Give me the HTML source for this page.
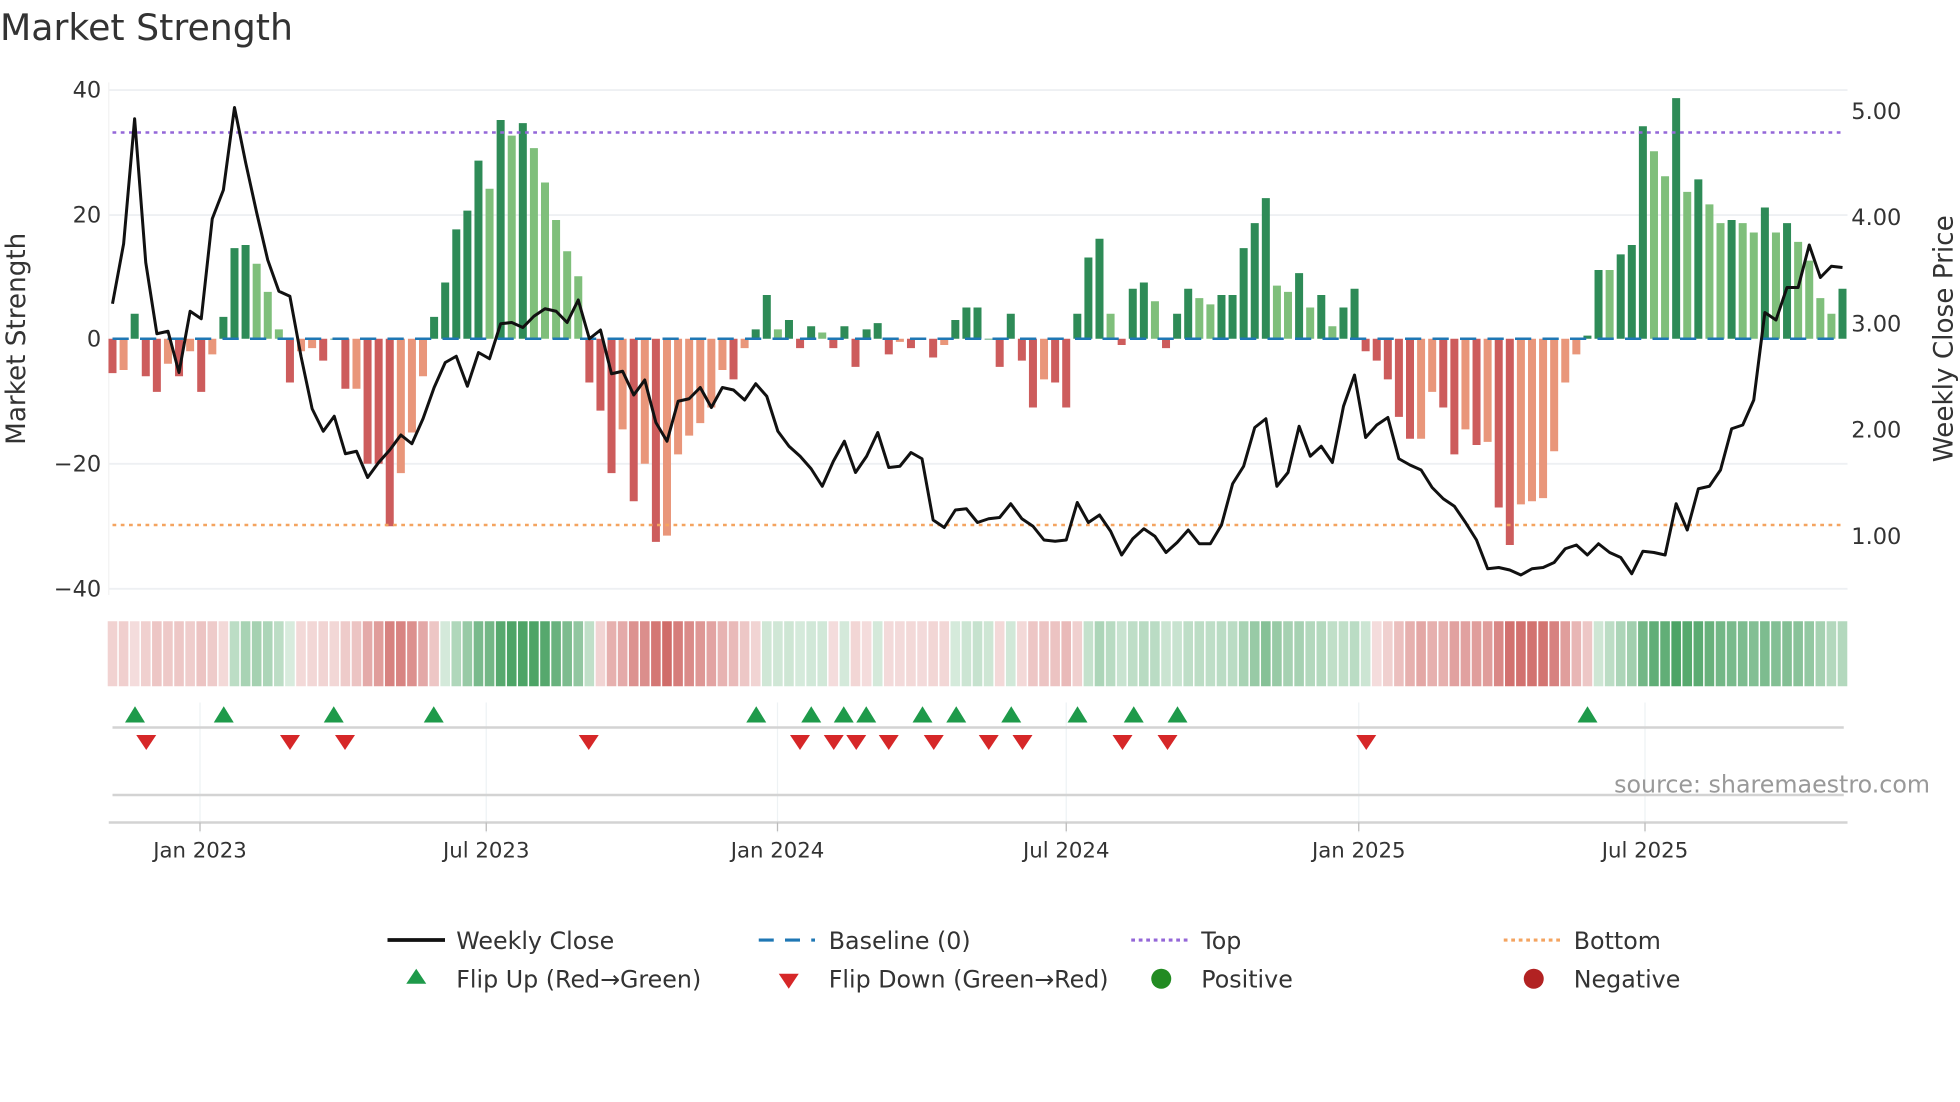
<!DOCTYPE html>
<html><head><meta charset="utf-8">
<style>
html,body{margin:0;padding:0;background:#fff;}
svg{display:block;}
text{font-family:"DejaVu Sans","Liberation Sans",sans-serif;fill:#333;}
</style></head>
<body>
<svg id="c" width="1960" height="1102" viewBox="0 0 1568 881.6" xmlns="http://www.w3.org/2000/svg">
<rect x="0" y="0" width="1568" height="881.6" fill="#fff"/>
<text x="0" y="32" font-size="29">Market Strength</text>
<g stroke="#eef0f3" stroke-width="1.5">
<line x1="87" y1="72" x2="1478" y2="72"/>
<line x1="87" y1="172" x2="1478" y2="172"/>
<line x1="87" y1="371" x2="1478" y2="371"/>
<line x1="87" y1="471" x2="1478" y2="471"/>
</g>
<line x1="87" y1="66" x2="87" y2="476" stroke="#f2f2f2" stroke-width="1"/>
<g font-size="18" text-anchor="end">
<text x="81" y="78">40</text>
<text x="81" y="178">20</text>
<text x="81" y="277">0</text>
<text x="81" y="377">−20</text>
<text x="81" y="477">−40</text>
</g>
<g font-size="18">
<text x="1481" y="95">5.00</text>
<text x="1481" y="180">4.00</text>
<text x="1481" y="265">3.00</text>
<text x="1481" y="350">2.00</text>
<text x="1481" y="435">1.00</text>
</g>
<text transform="translate(20,271) rotate(-90)" font-size="21" text-anchor="middle">Market Strength</text>
<text transform="translate(1562,271) rotate(-90)" font-size="21" text-anchor="middle">Weekly Close Price</text>
<g id="bars"></g>
<line x1="90" y1="271" x2="1476" y2="271" stroke="#1f77b4" stroke-width="2" stroke-dasharray="13,9"/>
<line x1="90" y1="106" x2="1476" y2="106" stroke="#9467d8" stroke-width="2" stroke-dasharray="3,3.6"/>
<line x1="90" y1="420" x2="1476" y2="420" stroke="#f4a460" stroke-width="2" stroke-dasharray="3,3.6"/>
<polyline id="pl" fill="none" stroke="#111" stroke-width="2.4" stroke-linejoin="round"/>
<g id="strip"></g>
<g stroke="#eef2f4" stroke-width="1">
<line x1="160" y1="562" x2="160" y2="666"/><line x1="389" y1="562" x2="389" y2="666"/>
<line x1="622" y1="562" x2="622" y2="666"/><line x1="853" y1="562" x2="853" y2="666"/>
<line x1="1087" y1="562" x2="1087" y2="666"/><line x1="1316" y1="562" x2="1316" y2="666"/>
</g>
<line x1="90" y1="582" x2="1475" y2="582" stroke="#d3d3d3" stroke-width="2"/>
<line x1="90" y1="636" x2="1475" y2="636" stroke="#d3d3d3" stroke-width="2"/>
<line x1="87" y1="658" x2="1478" y2="658" stroke="#d3d3d3" stroke-width="2"/>
<g stroke="#bbb" stroke-width="1">
<line x1="160" y1="658" x2="160" y2="665"/><line x1="389" y1="658" x2="389" y2="665"/>
<line x1="622" y1="658" x2="622" y2="665"/><line x1="853" y1="658" x2="853" y2="665"/>
<line x1="1087" y1="658" x2="1087" y2="665"/><line x1="1316" y1="658" x2="1316" y2="665"/>
</g>
<g id="tri"></g>
<text x="1544" y="634" font-size="19" text-anchor="end" style="fill:#999">source: sharemaestro.com</text>
<g font-size="17" text-anchor="middle">
<text x="160" y="686">Jan 2023</text><text x="389" y="686">Jul 2023</text>
<text x="622" y="686">Jan 2024</text><text x="853" y="686">Jul 2024</text>
<text x="1087" y="686">Jan 2025</text><text x="1316" y="686">Jul 2025</text>
</g>
<g font-size="19">
<line x1="310" y1="752" x2="356" y2="752" stroke="#111" stroke-width="3"/>
<text x="365" y="759">Weekly Close</text>
<line x1="607" y1="752" x2="652" y2="752" stroke="#1f77b4" stroke-width="2.5" stroke-dasharray="12,9"/>
<text x="663" y="759">Baseline (0)</text>
<line x1="905" y1="752" x2="950" y2="752" stroke="#9467d8" stroke-width="2.5" stroke-dasharray="3,3"/>
<text x="961" y="759">Top</text>
<line x1="1203" y1="752" x2="1248" y2="752" stroke="#f4a460" stroke-width="2.5" stroke-dasharray="3,3"/>
<text x="1259" y="759">Bottom</text>
<polygon points="333,775 341,787 325,787" fill="#1e9a4a"/>
<text x="365" y="790">Flip Up (Red→Green)</text>
<polygon points="623,779 639,779 631,791" fill="#d62728"/>
<text x="663" y="790">Flip Down (Green→Red)</text>
<circle cx="929" cy="783" r="8" fill="#228b22"/>
<text x="961" y="790">Positive</text>
<circle cx="1227" cy="783" r="8" fill="#b22222"/>
<text x="1259" y="790">Negative</text>
</g>
</svg>
<script>
(function(){
var NS="http://www.w3.org/2000/svg";
var B=[[-5.5,1],[-5,0],[4,1],[-6,1],[-8.5,1],[-4,0],[-6,1],[-2,0],[-8.5,1],[-2.5,0],[3.5,1],[14.5,1],[15,1],[12,0],[7.5,0],[1.5,0],[-7,1],[-2,0],[-1.5,0],[-3.5,1],[0,1],[-8,1],[-8,0],[-20,1],[-20,1],[-30,1],[-21.5,0],[-15,0],[-6,0],[3.5,1],[9,1],[17.5,1],[20.5,1],[28.5,1],[24,0],[35,1],[32.5,0],[34.5,1],[30.5,0],[25,0],[19,0],[14,0],[10,0],[-7,1],[-11.5,1],[-21.5,1],[-14.5,0],[-26,1],[-20,0],[-32.5,1],[-31.5,0],[-18.5,0],[-15.5,0],[-13.5,0],[-11,0],[-5,0],[-6.5,1],[-1.5,0],[1.5,1],[7,1],[1.5,0],[3,1],[-1.5,1],[2,1],[1,0],[-1.5,1],[2,1],[-4.5,1],[1.5,1],[2.5,1],[-2.5,1],[-0.5,0],[-1.5,1],[0,1],[-3,1],[-1,0],[3,1],[5,1],[5,1],[0,1],[-4.5,1],[4,1],[-3.5,1],[-11,1],[-6.5,0],[-7,1],[-11,1],[4,1],[13,1],[16,1],[4,0],[-1,1],[8,1],[9,1],[6,0],[-1.5,1],[4,1],[8,1],[6.5,0],[5.5,0],[7,1],[7,1],[14.5,1],[18.5,1],[22.5,1],[8.5,0],[7.5,0],[10.5,1],[5,0],[7,1],[2,0],[5,1],[8,1],[-2,1],[-3.5,1],[-6.5,1],[-12.5,1],[-16,1],[-16,0],[-8.5,0],[-11,1],[-18.5,1],[-14.5,0],[-17,1],[-16.5,0],[-27,1],[-33,1],[-26.5,0],[-26,0],[-25.5,0],[-18,0],[-7,0],[-2.5,0],[0.5,1],[11,1],[11,0],[13.5,1],[15,1],[34,1],[30,0],[26,0],[38.5,1],[23.5,0],[25.5,1],[21.5,0],[18.5,0],[19,1],[18.5,0],[17,0],[21,1],[17,0],[18.5,1],[15.5,0],[12.5,0],[6.5,0],[4,0],[8,1]];
var n=B.length,x0=90,x1=1474,p=(x1-x0)/(n-1);
var bars=document.getElementById('bars'),strip=document.getElementById('strip');
var s=0;
for(var i=0;i<n;i++){
 var v=B[i][0],d=B[i][1],x=x0+i*p;
 var col=v>=0?(d?'#2e8b57':'#7fbf7b'):(d?'#cd5c5c':'#e9967a');
 var h=Math.abs(v)*5;
 var r=document.createElementNS(NS,'rect');
 r.setAttribute('x',(x-3.2).toFixed(2));r.setAttribute('width','6.4');
 r.setAttribute('y',v>=0?271-h:271);r.setAttribute('height',Math.max(h,0.6));
 r.setAttribute('fill',col);bars.appendChild(r);
 s=0.55*s+0.45*v;
 var a=Math.min(1,Math.abs(s)/30)*0.7+0.2;
 var c=document.createElementNS(NS,'rect');
 c.setAttribute('x',(x-p/2+0.6).toFixed(2));c.setAttribute('width',(p-1.2).toFixed(2));
 c.setAttribute('y','497');c.setAttribute('height','52');
 c.setAttribute('fill',s>=0?'#3a9a55':'#c8524f');c.setAttribute('fill-opacity',a.toFixed(2));
 strip.appendChild(c);
}
var L=[243,195,95,210,267,265,298,249,255,175,152,86,130,170,208,233,237,285,327,345,333,363,361,382,370,360,348,355,335,310,290,285,309,282,287,259,258,262,253,247,249,258,240,271,264,299,297,316,304,338,353,321,319,310,326,310,312,320,307,317,345,357,365,375,389,369,353,378,365,346,374,373,362,367,416,422,408,407,418,415,414,403,415,421,432,433,432,402,418,412,425,444,431,423,429,442,434,424,435,435,420,387,373,342,335,389,378,341,365,357,370,325,300,350,340,334,367,372,376,390,399,405,418,432,455,454,456,460,455,454,450,439,436,444,435,442,446,459,441,442,444,403,424,391,389,376,343,340,320,250,256,230,230,196,222,213,214];
var m=L.length,q=(x1-x0)/(m-1),pts=[];
for(var j=0;j<m;j++)pts.push((x0+j*q).toFixed(1)+','+L[j]);
document.getElementById('pl').setAttribute('points',pts.join(' '));
var tri=document.getElementById('tri');
[108,179,267,347,605,649,675,693,738,765,809,862,907,942,1270].forEach(function(x){
 var t=document.createElementNS(NS,'polygon');
 t.setAttribute('points',x+',565 '+(x+8)+',578 '+(x-8)+',578');t.setAttribute('fill','#1e9a4a');tri.appendChild(t);});
[117,232,276,471,640,667,685,711,747,791,818,898,934,1093].forEach(function(x){
 var t=document.createElementNS(NS,'polygon');
 t.setAttribute('points',(x-8)+',588 '+(x+8)+',588 '+x+',600');t.setAttribute('fill','#d62728');tri.appendChild(t);});
})();
</script>
</body></html>
